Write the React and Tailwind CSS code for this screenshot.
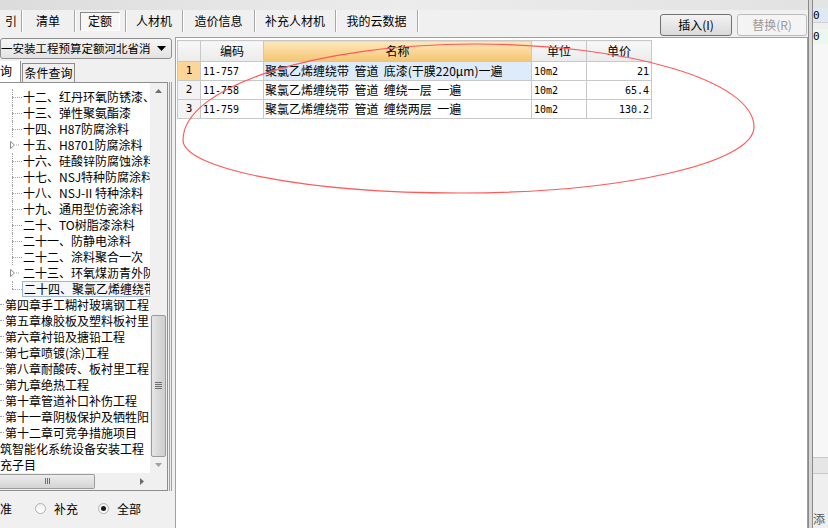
import React from 'react';

const CJK = { fontFamily: '"Noto Sans CJK SC", "Noto Sans", sans-serif' };
const MONO = { fontFamily: '"DejaVu Sans Mono", "Liberation Mono", monospace' };

const tabs = [
  { label: '引', w: 'w-[22px]', pad: 'pl-[1px]' },
  { label: '清单', w: 'w-[53px]' },
  { label: '定额', w: 'w-[51px]', active: true },
  { label: '人材机', w: 'w-[57px]' },
  { label: '造价信息', w: 'w-[72px]' },
  { label: '补充人材机', w: 'w-[81px]' },
  { label: '我的云数据', w: 'w-[82px]' },
];

const subItems = [
  { t: '十二、红丹环氧防锈漆、' },
  { t: '十三、弹性聚氨酯漆' },
  { t: '十四、H87防腐涂料' },
  { t: '十五、H8701防腐涂料', exp: true },
  { t: '十六、硅酸锌防腐蚀涂料' },
  { t: '十七、NSJ特种防腐涂料' },
  { t: '十八、NSJ-II 特种涂料' },
  { t: '十九、通用型仿瓷涂料' },
  { t: '二十、TO树脂漆涂料' },
  { t: '二十一、防静电涂料' },
  { t: '二十二、涂料聚合一次' },
  { t: '二十三、环氧煤沥青外防', exp: true },
  { t: '二十四、聚氯乙烯缠绕带', sel: true, last: true },
];

const chapters = [
  '第四章手工糊衬玻璃钢工程',
  '第五章橡胶板及塑料板衬里',
  '第六章衬铅及搪铅工程',
  '第七章喷镀(涂)工程',
  '第八章耐酸砖、板衬里工程',
  '第九章绝热工程',
  '第十章管道补口补伤工程',
  '第十一章阴极保护及牺牲阳',
  '第十二章可竞争措施项目',
];

const rows = [
  { n: 1, code: '11-757', name: '聚氯乙烯缠绕带  管道  底漆(干膜220μm)一遍', unit: '10m2', price: '21' },
  { n: 2, code: '11-758', name: '聚氯乙烯缠绕带  管道  缠绕一层  一遍', unit: '10m2', price: '65.4' },
  { n: 3, code: '11-759', name: '聚氯乙烯缠绕带  管道  缠绕两层  一遍', unit: '10m2', price: '130.2' },
];

function SubRow({ item }) {
  return (
    <div className="flex h-[16px] items-stretch whitespace-nowrap">
      <div className="w-[12px] shrink-0" />
      <div className="relative w-[10px] shrink-0">
        {item.exp ? (
          <svg width="10" height="16" className="absolute left-[-3px] top-0">
            <path d="M1.5 4.5 L1.5 11.5 L5.5 8 Z" fill="none" stroke="#8a8a8a" strokeWidth="1" />
            <path d="M7 8 L10 8" stroke="#a0a0a0" strokeDasharray="1 1" />
          </svg>
        ) : (
          <>
            <div className={`border-l border-dotted border-[#a0a0a0] ${item.last ? 'h-[8px]' : 'h-full'}`} />
            <div className="absolute left-0 right-0 top-[8px] border-t border-dotted border-[#a0a0a0]" />
          </>
        )}
      </div>
      <div
        className={`flex items-center pl-[1px] pr-[2px] text-[12px] leading-none text-black ${
          item.sel ? 'border border-[#9fb8d8] bg-[#f4f7fb]' : ''
        }`}
      >
        {item.t}
      </div>
    </div>
  );
}

function ChapterRow({ t }) {
  return (
    <div className="flex h-[16px] items-center whitespace-nowrap">
      <div className="w-[4px] shrink-0 border-t border-dotted border-[#a0a0a0]" />
      <div className="pl-[1px] text-[12px] leading-none text-black">{t}</div>
    </div>
  );
}

function Radio({ checked }) {
  return (
    <span className="flex h-[11px] w-[11px] items-center justify-center rounded-full border border-[#b0b0b0] bg-gradient-to-b from-[#f0f0f0] to-white">
      {checked && <span className="h-[5px] w-[5px] rounded-full bg-[#1a1a1a]" />}
    </span>
  );
}

export default function App() {
  return (
    <div className="relative flex h-[528px] w-[828px] overflow-hidden bg-[#f0f0f0] text-[12px] text-black" style={CJK}>
      <div className="flex w-[808px] flex-col">
        {/* top strip */}
        <div className="h-[10px] bg-gradient-to-r from-[#dcdcdc] via-[#ececec] to-[#e2e2e2]" />

        {/* tab row + buttons */}
        <div className="flex h-[27px] justify-between">
          <div className="flex h-[22px]">
            {tabs.map(tab => (
              <div
                key={tab.label}
                className={`${tab.w} flex items-center justify-center border-r border-[#a8a8a8] shadow-[1px_0_0_#ffffff]`}
              >
                {tab.active ? (
                  <div className="flex h-[19px] w-[40px] items-center justify-center border border-t-[#8a8a8a] border-l-[#8a8a8a] border-r-white border-b-white bg-[#f7f7f7]">
                    定额
                  </div>
                ) : (
                  <span className={tab.pad}>{tab.label}</span>
                )}
              </div>
            ))}
          </div>
          <div className="flex items-end gap-[5px] pb-[1px] pr-[1px]">
            <button className="flex h-[22px] w-[72px] items-center justify-center rounded-[3px] border border-[#707070] bg-gradient-to-b from-[#f3f3f3] to-[#dadada] text-[12px]">
              插入(I)
            </button>
            <button className="flex h-[22px] w-[70px] items-center justify-center rounded-[3px] border border-[#bcbcbc] bg-[#f4f4f4] text-[12px] text-[#9a9a9a]">
              替换(R)
            </button>
          </div>
        </div>

        {/* content */}
        <div className="flex min-h-0 flex-1">
          {/* left panel */}
          <div className="flex w-[175px] shrink-0 flex-col">
            <div className="mt-[1px] flex h-[21px] w-[172px] items-center rounded-[3px] border border-[#8e8e8e] bg-gradient-to-b from-[#f5f5f5] to-[#e3e3e3] pr-[5px]">
              <span className="min-w-0 flex-1 overflow-hidden whitespace-nowrap text-[11.5px]">一安装工程预算定额河北省消</span>
              <svg width="9" height="5" className="ml-[4px] shrink-0">
                <path d="M0 0 L9 0 L4.5 5 Z" fill="#000" />
              </svg>
            </div>
            <div className="mt-[2px] flex h-[21px] items-end">
              <div className="flex h-[21px] w-[21px] items-center justify-start border-r border-[#8e8e8e] bg-white">询</div>
              <div className="ml-[1px] flex h-[19px] w-[53px] items-center justify-center border border-b-0 border-[#8e8e8e]">条件查询</div>
            </div>
            <div className="flex w-[172px] flex-1">
              {/* tree box */}
              <div className="flex h-[409px] w-[168px] flex-col border-r border-b border-t border-[#8e8e8e] bg-white">
                <div className="flex min-h-0 flex-1">
                  <div className="w-[150px] overflow-hidden pt-[6px]">
                    {subItems.map(it => (
                      <SubRow key={it.t} item={it} />
                    ))}
                    {chapters.map(c => (
                      <ChapterRow key={c} t={c} />
                    ))}
                    <div className="flex h-[16px] items-center whitespace-nowrap">筑智能化系统设备安装工程</div>
                    <div className="flex h-[16px] items-center whitespace-nowrap">充子目</div>
                  </div>
                  {/* vertical scrollbar */}
                  <div className="flex w-[17px] flex-col bg-[#f0f0f0]">
                    <div className="flex h-[17px] items-center justify-center">
                      <svg width="7" height="4"><path d="M0 4 L7 4 L3.5 0 Z" fill="#6e6e6e" /></svg>
                    </div>
                    <div className="h-[215px]" />
                    <div className="mx-[1px] flex h-[142px] items-center justify-center rounded-[2px] border border-[#9a9a9a] bg-gradient-to-r from-[#e6e6e6] via-[#d8d8d8] to-[#cfcfcf]">
                      <div className="flex flex-col gap-[1px]">
                        <div className="h-[1px] w-[7px] bg-[#6e6e6e]" />
                        <div className="h-[1px] w-[7px] bg-[#6e6e6e]" />
                        <div className="h-[1px] w-[7px] bg-[#6e6e6e]" />
                        <div className="h-[1px] w-[7px] bg-[#6e6e6e]" />
                      </div>
                    </div>
                    <div className="flex flex-1 items-center justify-center">
                      <svg width="7" height="4"><path d="M0 0 L7 0 L3.5 4 Z" fill="#a0a0a0" /></svg>
                    </div>
                  </div>
                </div>
                {/* horizontal scrollbar */}
                <div className="flex h-[17px] bg-[#f0f0f0]">
                  <div className="my-[1px] flex w-[95px] items-center justify-center rounded-r-[2px] border border-l-0 border-[#9a9a9a] bg-gradient-to-b from-[#ececec] to-[#d4d4d4]">
                    <div className="flex gap-[1px]">
                      <div className="h-[6px] w-[1px] bg-[#6e6e6e]" />
                      <div className="h-[6px] w-[1px] bg-[#6e6e6e]" />
                      <div className="h-[6px] w-[1px] bg-[#6e6e6e]" />
                    </div>
                  </div>
                  <div className="flex-1" />
                  <div className="flex w-[17px] items-center justify-center">
                    <svg width="4" height="7"><path d="M0 0 L0 7 L4 3.5 Z" fill="#6e6e6e" /></svg>
                  </div>
                  <div className="w-[17px]" />
                </div>
              </div>
              <div className="ml-[1px] w-[3px] border-x border-[#a0a0a0]" />
            </div>
            <div className="flex h-[38px] items-center gap-[10px] pb-[1px]">
              <span className="w-[20px] text-left">准</span>
              <div className="flex items-center gap-[8px] pl-[5px]">
                <Radio />
                <span>补充</span>
              </div>
              <div className="flex items-center gap-[8px] pl-[10px]">
                <Radio checked />
                <span>全部</span>
              </div>
            </div>
          </div>

          {/* right panel */}
          <div className="flex-1 border border-b-0 border-[#a0a0a0] bg-white pl-[1px] pt-[2px]">
            <table className="border-collapse text-[12px]">
              <thead>
                <tr className="h-[21px]">
                  <th className="w-[23px] border border-[#c8c8c8] bg-gradient-to-b from-[#f8f8f8] to-[#ebebeb]" />
                  <th className="w-[63px] border border-[#c8c8c8] bg-gradient-to-b from-[#f8f8f8] to-[#ebebeb] font-normal">编码</th>
                  <th className="w-[268px] border border-[#c8c8c8] bg-gradient-to-b from-[#fde8bd] to-[#f5c470] font-normal">名称</th>
                  <th className="w-[55px] border border-[#c8c8c8] bg-gradient-to-b from-[#f8f8f8] to-[#ebebeb] font-normal">单位</th>
                  <th className="w-[65px] border border-[#c8c8c8] bg-gradient-to-b from-[#f8f8f8] to-[#ebebeb] font-normal">单价</th>
                </tr>
              </thead>
              <tbody>
                {rows.map(r => (
                  <tr key={r.n} className="h-[19px]">
                    <td className={`border border-[#c8c8c8] text-center text-[11px] ${r.n === 1 ? 'bg-[#fdd596]' : 'bg-[#f3f3f3]'}`} style={MONO}>
                      {r.n}
                    </td>
                    <td className="border border-[#c8c8c8] px-[2px] text-[10px]" style={MONO}>{r.code}</td>
                    <td className={`whitespace-pre border border-[#c8c8c8] px-[1px] leading-none ${r.n === 1 ? 'bg-[#ddebfb]' : ''}`}>{r.name}</td>
                    <td className="border border-[#c8c8c8] px-[2px] text-[10px]" style={MONO}>{r.unit}</td>
                    <td className="border border-[#c8c8c8] px-[2px] text-right text-[10px]" style={MONO}>{r.price}</td>
                  </tr>
                ))}
              </tbody>
            </table>
          </div>
        </div>
      </div>

      {/* right edge strip */}
      <div className="flex w-[20px] shrink-0">
        <div className="w-[5px] border-l border-r border-[#8a8a8a] bg-[#d8d8d8]" />
        <div className="flex flex-1 flex-col bg-[#efefef]">
          <div className="h-[8px] bg-[#e4e4e4]" />
          <div className="flex h-[15px] items-center border-b border-[#d0d0d0] bg-[#dfe8f3] text-[11px] leading-none" style={MONO}>0</div>
          <div className="h-[6px]" />
          <div className="flex h-[15px] items-center bg-[#eef7ef] text-[11px] leading-none" style={MONO}>0</div>
          <div className="h-[413px] bg-[#f7f7f7]" />
          <div className="h-[17px] border-y border-[#c8c8c8] bg-[#e6e6e6]" />
          <div className="flex flex-1 items-end overflow-hidden whitespace-nowrap text-[12px] text-[#555]">添</div>
        </div>
      </div>

      {/* red hand-drawn annotation loop over the screenshot */}
      <svg className="pointer-events-none absolute left-0 top-0" width="828" height="528">
        <path
          d="M183 140 C183 87 314 44 475 44 C629 44 754 81 754 127 C754 163 622 193 460 193 C307 193 183 169 183 140 Z"
          fill="none"
          stroke="#ff5a5a"
          strokeWidth="1.2"
        />
      </svg>
    </div>
  );
}
